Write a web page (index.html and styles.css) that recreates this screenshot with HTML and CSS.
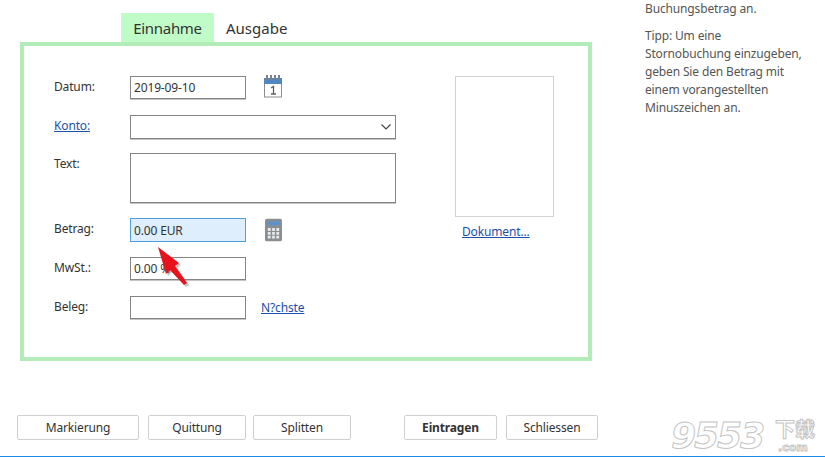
FILE: index.html
```html
<!DOCTYPE html>
<html lang="de">

<head>
    <meta charset="UTF-8">
    <meta name="viewport" content="width=device-width, initial-scale=1.0">
    <title>Buchung</title>
    <link rel="stylesheet" href="styles.css">
</head>

<body>
    <div class="main">
        <div class="left">
            <div class="tabs">
                <div class="tab tab-active">Einnahme</div>
                <div class="tab">Ausgabe</div>
            </div>

            <div class="panel">
                <form class="fields">
                    <label class="lbl">Datum:</label>
                    <input class="box box-short" type="text" value="2019-09-10">
                    <svg class="icon icon-cal" width="22" height="24" viewBox="0 0 22 24">
                        <rect x="2.500" y="6" width="17" height="17" fill="#fff" stroke="#8a8f94"/>
                        <rect x="2" y="4" width="18" height="6" fill="#4f86c0"/>
                        <path d="M5 1v5M9 1v5M13 1v5M17 1v5" stroke="#7d8288" stroke-width="2"/>
                        <path d="M9 14l2.500-1.500V20M9 20h5" fill="none" stroke="#5c6066" stroke-width="1.300"/>
                    </svg>

                    <a class="lbl link" href="#">Konto:</a>
                    <div class="box box-wide combo">
                        <svg width="10" height="6" viewBox="0 0 10 6">
                            <path d="M.5 .5L5 5l4.500-4.500" fill="none" stroke="#444" stroke-width="1.200"/>
                        </svg>
                    </div>

                    <label class="lbl">Text:</label>
                    <textarea class="box box-wide box-text"></textarea>

                    <label class="lbl">Betrag:</label>
                    <input class="box box-short box-focus" type="text" value="0.00 EUR">
                    <svg class="icon icon-calc" width="17" height="24" viewBox="0 0 18 24">
                        <rect x="0" y="0" width="18" height="24" rx="2" fill="#8b8e91"/>
                        <rect x="2.500" y="3" width="13" height="4" fill="#5b93cf"/>
                        <path d="M3 10h3v3H3zM7.500 10h3v3h-3zM12 10h3v3h-3zM3 14h3v3H3zM7.500 14h3v3h-3zM12 14h3v3h-3zM3 18h3v3H3zM7.500 18h3v3h-3zM12 18h3v3h-3z" fill="#e8e9ea"/>
                    </svg>

                    <label class="lbl">MwSt.:</label>
                    <input class="box box-short" type="text" value="0.00 %">

                    <label class="lbl">Beleg:</label>
                    <input class="box box-short" type="text">
                    <a class="link next" href="#">N?chste</a>
                </form>

                <div class="doc">
                    <div class="doc-preview"></div>
                    <a class="link doc-link" href="#">Dokument...</a>
                </div>
            </div>
        </div>

        <div class="help">
            <p>Buchungsbetrag an.</p>
            <p>Tipp: Um eine Stornobuchung einzugeben, geben Sie den Betrag mit einem vorangestellten Minuszeichen an.</p>
        </div>
    </div>

    <div class="buttons">
        <button class="btn btn-mark" type="button">Markierung</button>
        <button class="btn btn-quit" type="button">Quittung</button>
        <button class="btn btn-split" type="button">Splitten</button>
        <button class="btn btn-save" type="button">Eintragen</button>
        <button class="btn btn-close" type="button">Schliessen</button>
    </div>

    <div class="bottom-line"></div>

    <!-- roter Pfeil liegt ueber dem Formular -->
    <svg class="arrow" width="40" height="50" viewBox="0 0 40 50">
        <path d="M1 1L22 17l-4 3 12 17-3 2-14-15-4 4z" transform="translate(2 2)" fill="#555" opacity=".35"/>
        <path d="M1 1L22 17l-4 3 12 17-3 2-14-15-4 4z" fill="#e8121c"/>
    </svg>

    <div class="watermark"><span class="wm-num">9553</span><span class="wm-cn">下载</span><span class="wm-com">.com</span></div>
</body>

</html>
```

FILE: styles.css
```css
/* seite */
html,
body {
    margin: 0;
    height: 100%;
}

body {
    width: 825px;
    height: 457px;
    position: relative;
    overflow: hidden;
    display: flex;
    flex-direction: column;
    background: #fff;
    color: #333;
    font-family: "Noto Sans", "Open Sans", sans-serif;
    font-size: 12px;
    letter-spacing: -.15px;
}

.main {
    display: flex;
}

.left {
    width: 645px;
    padding: 13px 0 0 20px;
    box-sizing: border-box;
}

/* tabs */
.tabs {
    display: flex;
    margin-left: 101px;
    height: 29px;
}

.tab {
    padding: 0 12px;
    line-height: 31px;
    font-size: 15px;
    letter-spacing: 0;
}

.tab-active {
    width: 93px;
    padding: 0;
    text-align: center;
    background: #c0fcc8;
    letter-spacing: -.3px;
}

.panel {
    width: 572px;
    height: 319px;
    box-sizing: border-box;
    border: 4px solid #b1ecb9;
    padding: 30px 0 0 30px;
    display: flex;
}

/* formular */
.fields {
    width: 371px;
    display: grid;
    grid-template-columns: 76px 116px 1fr;
    grid-template-rows: 39px 38px 65px 39px 39px 30px;
    align-items: start;
}

.lbl {
    grid-column: 1;
    padding-top: 2px;
    line-height: 18px;
}

.box {
    box-sizing: border-box;
    height: 23px;
    margin: 0;
    padding: 0 3px;
    border: 1px solid #858585;
    background: #fff;
    color: #333;
    font-family: inherit;
    font-size: 12px;
    letter-spacing: inherit;
    outline: none;
    resize: none;
    box-shadow: 0 1px 0 #c4c4c4;
}

.box-short {
    width: 116px;
}

.box-wide {
    grid-column: 2 / 4;
    width: 266px;
    height: 24px;
}

.box-text {
    height: 50px;
}

.box-focus {
    height: 24px;
    background: #deeefc;
    border-color: #4d9fe0;
    box-shadow: none;
}

.combo {
    display: flex;
    align-items: center;
    justify-content: flex-end;
    padding-right: 4px;
}

.icon-cal {
    margin: -2px 0 0 16px;
}

.icon-calc {
    margin: 0 0 0 19px;
}

.link {
    color: #1c4fa8;
    text-decoration: underline;
}

.next {
    margin: 3px 0 0 15px;
}

/* dokument */
.doc {
    width: 99px;
    margin-left: 30px;
    display: flex;
    flex-direction: column;
    gap: 6px;
}

.doc-preview {
    box-sizing: border-box;
    width: 99px;
    height: 141px;
    border: 1px solid #d2d2d2;
}

.doc-link {
    margin-left: 7px;
}

/* hilfe rechts */
.help {
    width: 165px;
    line-height: 18px;
    color: #555;
}

.help p {
    margin: 0 0 9px;
}

/* knoepfe */
.buttons {
    display: flex;
    margin: 54px 0 0 17px;
}

.btn {
    box-sizing: border-box;
    height: 25px;
    padding: 0;
    border: 1px solid #d0d0d0;
    border-radius: 2px;
    background: #fff;
    color: #333;
    font-family: inherit;
    font-size: 12px;
    letter-spacing: inherit;
}

.btn-mark {
    width: 122px;
    margin-right: 9px;
}

.btn-quit {
    width: 98px;
    margin-right: 7px;
}

.btn-split {
    width: 98px;
    margin-right: 53px;
}

.btn-save {
    width: 93px;
    margin-right: 9px;
    font-weight: bold;
}

.btn-close {
    width: 92px;
}

.bottom-line {
    margin-top: auto;
    height: 1px;
    background: #1a8ae6;
}

/* ueberlagerungen */
.arrow {
    position: absolute;
    left: 157px;
    top: 246px;
}

.watermark {
    position: absolute;
    left: 671px;
    top: 418px;
    width: 154px;
    height: 38px;
    color: #fff;
    -webkit-text-stroke: 1px #c4c4c4;
    line-height: 1;
    letter-spacing: 0;
}

.wm-num {
    position: absolute;
    left: 0;
    top: 0;
    font-family: "DejaVu Sans", sans-serif;
    font-size: 36px;
    font-weight: bold;
    font-style: italic;
    letter-spacing: -2px;
}

.wm-cn {
    position: absolute;
    left: 104px;
    top: 1px;
    font-family: "Noto Sans CJK SC", sans-serif;
    font-size: 20px;
    font-weight: bold;
}

.wm-com {
    position: absolute;
    left: 107px;
    top: 24px;
    font-family: "DejaVu Sans", sans-serif;
    font-size: 11px;
    font-weight: bold;
}
```
